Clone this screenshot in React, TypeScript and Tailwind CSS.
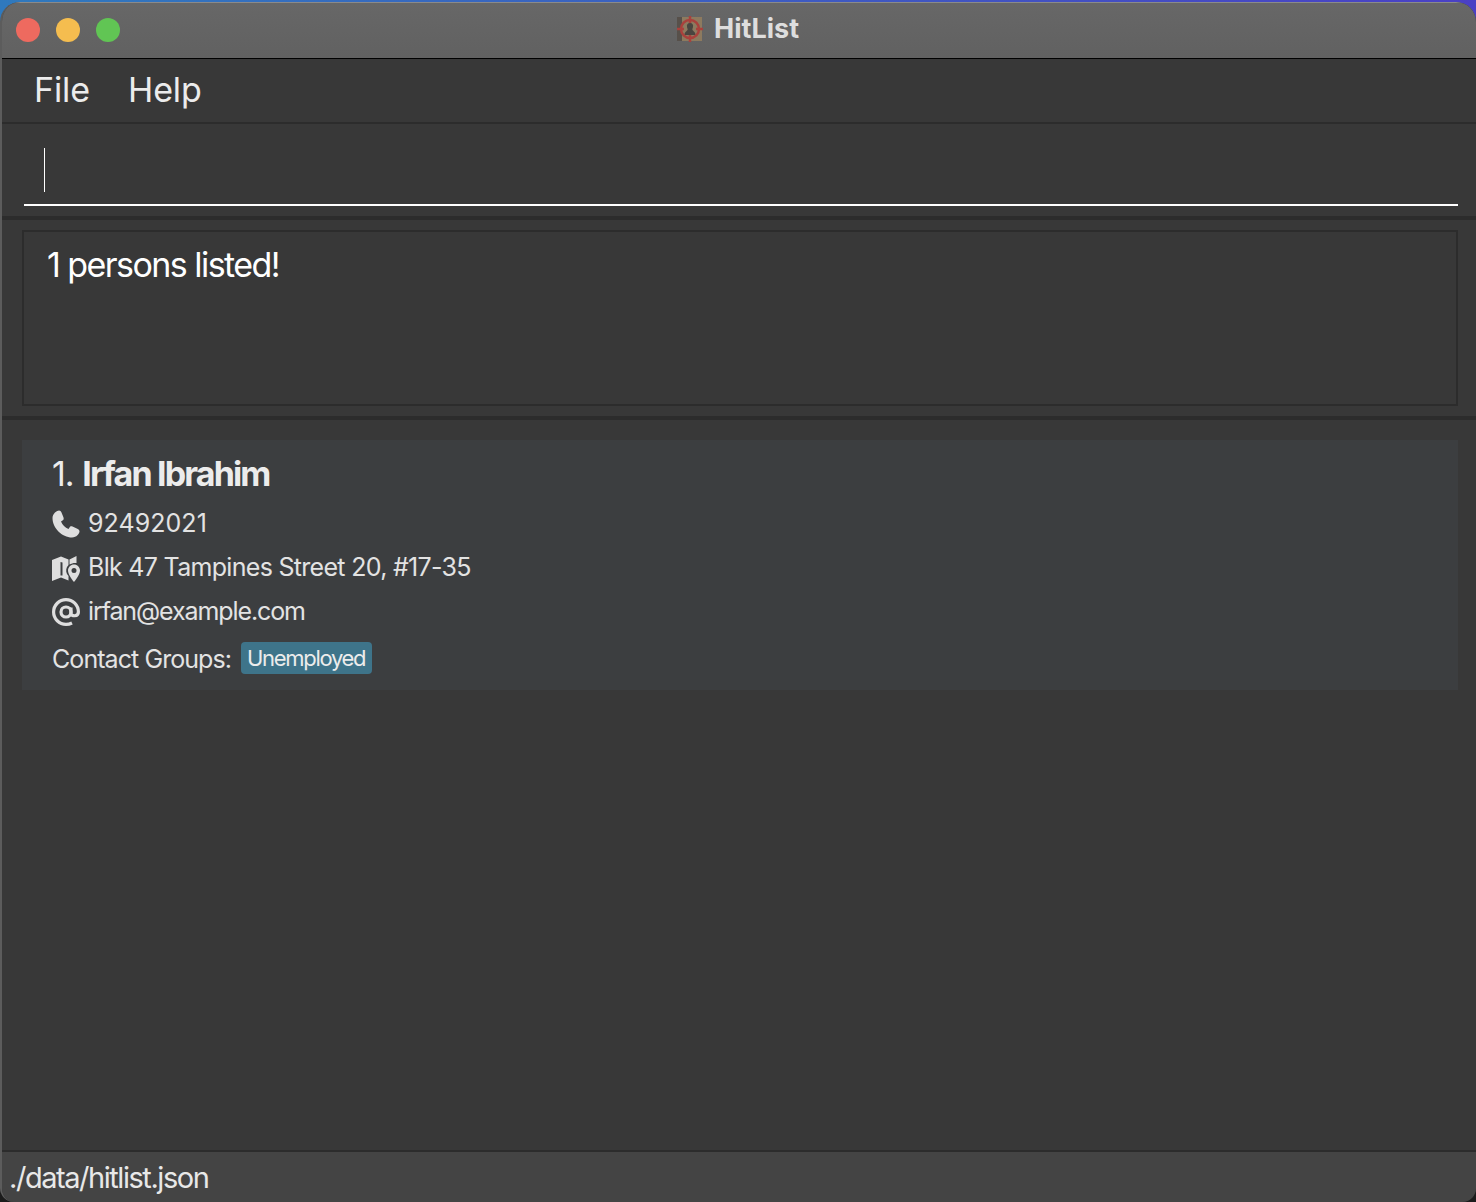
import React from "react";

const PhoneIcon = () => (
  <svg viewBox="0 0 28 28" className="w-[28px] h-[28px]" fill="#dedede">
    <path d="M7 0.500 C5 0.500 0.500 3.500 0.500 8 C0.500 18 10 27.500 20 27.500 C24.500 27.500 27.500 23.500 27.500 21.500 C27.500 20 26.500 19.300 25.300 18.700 L20.500 16.500 C19 16 18 16.500 17.500 17.500 L16.500 19 C13 17.500 10.500 15 9 11.500 L10.500 10.500 C11.500 10 12 9 11.500 7.500 L9.500 2.500 C9 1.300 8.200 0.500 7 0.500 Z" />
  </svg>
);

const MapIcon = () => (
  <svg viewBox="0 0 28 28" className="w-[28px] h-[28px]" fill="#dedede">
    <path
      fillRule="evenodd"
      d="M0 6 L9 2.500 L16.500 5.500 L16.500 11 C14 13.500 13.500 17 15 20 L16.500 22 L16.500 26.500 L9 23.500 L0 27 Z M8.500 8 L8.500 21.500 L10.500 21.500 L10.500 8.500 Z"
    />
    <path d="M17.500 5.500 L24.500 2 L24.500 9 C22 8.700 19.500 9.300 17.500 10.500 Z" />
    <path
      fillRule="evenodd"
      d="M22 10.500 C25.300 10.500 28 13.200 28 16.500 C28 19.800 24.800 24.500 22 28 C19.200 24.500 16 19.800 16 16.500 C16 13.200 18.700 10.500 22 10.500 Z M22 14 A2.500 2.500 0 1 0 22 19 A2.500 2.500 0 1 0 22 14 Z"
    />
  </svg>
);

const AtIcon = () => (
  <svg viewBox="0 0 28 28" className="w-[28px] h-[28px]" fill="none" stroke="#dedede" strokeWidth="3.200">
    <circle cx="14" cy="14" r="5" />
    <path d="M19 9.500 V15.500 C19 18.500 26.400 19 26.400 14 C26.400 7 20.700 1.600 14 1.600 C7.200 1.600 1.600 7.200 1.600 14 C1.600 20.800 7.200 26.400 14 26.400 C16 26.400 18 26 20 25" />
  </svg>
);

const AppLogo = () => (
  <svg viewBox="0 0 28 28" className="w-[28px] h-[28px]">
    <rect x="1" y="2" width="25" height="24" fill="#8d7a5f" />
    <rect x="1" y="2" width="5" height="24" fill="#57504a" />
    <path d="M14 8 C11.500 8 10.500 10 11 12 C11.300 13.500 12 14 11.500 15 C10.500 16.500 8.500 17 8.500 20 L19.500 20 C19.500 17 17.500 16.500 16.500 15 C16 14 16.700 13.500 17 12 C17.500 10 16.500 8 14 8 Z" fill="#4a4540" />
    <circle cx="14" cy="14" r="9" fill="none" stroke="#a9413c" strokeWidth="2.500" />
    <path d="M14 1 V8 M14 20 V27 M1 14 H8 M20 14 H27" stroke="#a9413c" strokeWidth="2.500" />
  </svg>
);

const Divider = ({ className }: { className: string }) => <div className={className} />;

const InfoRow = ({ icon, text, tracking }: { icon: React.ReactNode; text: string; tracking: string }) => (
  <div className="flex items-center h-[44px]">
    <div className="w-[28px] h-[28px] flex items-center justify-center text-[#dedede]">{icon}</div>
    <span className={`ml-[8px] text-[25px] text-[#e3e3e3] ${tracking}`}>{text}</span>
  </div>
);

export default function App() {
  return (
    <div
      className="w-[1476px] h-[1202px] overflow-hidden bg-[linear-gradient(to_bottom,transparent_5%,#1c1c1c_5%),linear-gradient(to_right,#2f79bd,#4a40c4)]"
      style={{ fontFamily: "Inter, 'Noto Sans', sans-serif" }}
    >
      <div className="w-full h-[1200px] mt-[2px] flex flex-col bg-[#383838] rounded-t-[20px] rounded-b-[14px] overflow-hidden border-l-2 border-l-[#5c5c5c]">
        <header className="relative h-[56px] shrink-0 flex items-center pb-[1px] bg-[linear-gradient(to_bottom,#676767,#616161)] border-t border-t-[#8a8a8a]">
          <div className="flex items-center gap-[16px] pl-[14px]">
            <span className="w-[24px] h-[24px] rounded-full bg-[#ee6a5f]" />
            <span className="w-[24px] h-[24px] rounded-full bg-[#f5bd4f]" />
            <span className="w-[24px] h-[24px] rounded-full bg-[#61c554]" />
          </div>
          <div className="absolute left-[674px] top-0 h-full flex items-center gap-[10px] pb-[3px]">
            <AppLogo />
            <span className="text-[27px] font-bold text-[#dedede]">HitList</span>
          </div>
        </header>
        <Divider className="h-[1px] shrink-0 bg-black" />

        <nav className="h-[63px] shrink-0 flex items-center pl-[32px] gap-[38px] pb-[2px] text-[34px] tracking-[-0.1px] text-[#ececec]">
          <span>File</span>
          <span>Help</span>
        </nav>
        <Divider className="h-[2px] shrink-0 bg-[#2c2c2c]" />

        <div className="h-[92px] shrink-0 pl-[22px] pr-[18px] pt-[24px]">
          <div className="h-[58px] border-b-2 border-b-white pl-[20px]">
            <div className="w-[1px] h-[44px] bg-white" />
          </div>
        </div>
        <Divider className="h-[4px] shrink-0 bg-[#2c2c2c]" />

        <div className="h-[196px] shrink-0 pl-[20px] pr-[18px] pt-[10px]">
          <div className="h-[176px] border-2 border-[#2c2c2c] pl-[23px] pt-[12px] text-[34px] leading-[42px] tracking-[-1.55px] text-white">
            1 persons listed!
          </div>
        </div>
        <Divider className="h-[4px] shrink-0 bg-[#2c2c2c]" />

        <main className="flex-1 pl-[20px] pr-[18px] pt-[20px]">
          <article className="h-[250px] bg-[#3c3e40] pl-[30px] pt-[11px]">
            <h1 className="h-[44px] flex items-center text-[34px] tracking-[-1.85px] text-[#ececec]">
              <span className="tracking-[-1px]">1.&nbsp;</span>
              <span className="font-bold">Irfan Ibrahim</span>
            </h1>
            <div className="mt-[7px]">
              <InfoRow icon={<PhoneIcon />} text="92492021" tracking="tracking-[0.05px]" />
              <InfoRow icon={<MapIcon />} text="Blk 47 Tampines Street 20, #17-35" tracking="tracking-[-0.7px]" />
              <InfoRow icon={<AtIcon />} text="irfan@example.com" tracking="tracking-[-1.1px]" />
            </div>
            <div className="flex items-center mt-[4px] h-[40px]">
              <span className="pt-[4px] text-[25px] tracking-[-0.93px] text-[#e3e3e3]">Contact Groups:</span>
              <span className="ml-[10px] h-[32px] w-[131px] pl-[6px] flex items-center rounded-[4px] bg-[#3e748a] text-[22px] tracking-[-1.3px] text-[#ececec]">
                Unemployed
              </span>
            </div>
          </article>
        </main>

        <Divider className="h-[2px] shrink-0 bg-[#2c2c2c]" />
        <footer className="h-[50px] shrink-0 flex items-center pl-[7px] pt-[2px] bg-[#444444] text-[29px] tracking-[-1.45px] text-[#e8e8e8]">
          ./data/hitlist.json
        </footer>
      </div>
    </div>
  );
}
